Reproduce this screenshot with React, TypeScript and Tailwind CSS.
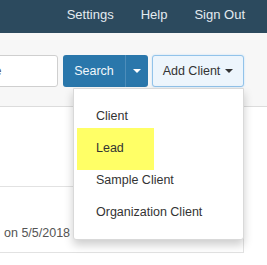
import React from 'react';

const font = { fontFamily: '"Liberation Sans", Arial, sans-serif' };

const Caret = ({ className }: { className: string }) => (
  <span
    className={`inline-block w-0 h-0 border-t-[4px] border-x-[4px] border-x-transparent ${className}`}
  />
);

const menuItems = ['Client', 'Lead', 'Sample Client', 'Organization Client'];

const App = () => {
  return (
    <div
      className="relative w-[267px] h-[265px] overflow-hidden bg-white text-[12.5px]"
      style={font}
    >
      {/* top nav */}
      <nav className="h-[33px] bg-[#2c4a5e] flex justify-end items-center gap-[27px] pr-[22px] pb-[3px] text-[13px] text-[#e4ebf0]">
        <span>Settings</span>
        <span>Help</span>
        <span>Sign Out</span>
      </nav>

      {/* search toolbar */}
      <div className="h-[74px] bg-[#f7f7f7] border-b border-[#dcdcdc] pt-[22px]">
        <div className="flex items-start">
          <div className="-ml-[45px] w-[103px] h-[32px] shrink-0 bg-white border border-[#cfcfcf] rounded-[3px] pl-[12px] flex items-center text-[#555] overflow-hidden">
            Name
          </div>
          <div className="ml-[5px] flex h-[32px] rounded-[3px] bg-[#2a77ab] text-[#f2f7fb]">
            <span className="w-[62px] flex items-center justify-center">Search</span>
            <span className="w-[23px] border-l border-[#4d8dba] flex items-center justify-center">
              <Caret className="border-t-white" />
            </span>
          </div>
          <div className="ml-[4px] w-[92px] h-[32px] rounded-[3px] bg-[#edf5fc] border border-[#92c3ea] shadow-[0_0_2px_#b9dbf5] flex items-center justify-center gap-[5px] text-[#333]">
            <span>Add Client</span>
            <Caret className="border-t-[#333]" />
          </div>
        </div>
      </div>

      {/* content panel */}
      <div className="mt-[79px] -ml-[10px] mr-[23px] h-[67px] border border-[#e2e2e2] bg-white pt-[37px] pl-[13px] text-[#555]">
        on 5/5/2018
      </div>

      {/* dropdown menu */}
      <div className="absolute left-[73px] top-[88px] w-[171px] bg-white border border-[#d9d9d9] rounded-b-[3px] shadow-[0_5px_10px_rgba(0,0,0,0.2)] py-[11px] text-[#333]">
        <div className="absolute left-[3px] top-[39px] w-[77px] h-[42px] bg-[#ffff66]" />
        {menuItems.map((item) => (
          <div key={item} className="relative h-[32px] pl-[22px] flex items-center">
            {item}
          </div>
        ))}
      </div>
    </div>
  );
};

export default App;
